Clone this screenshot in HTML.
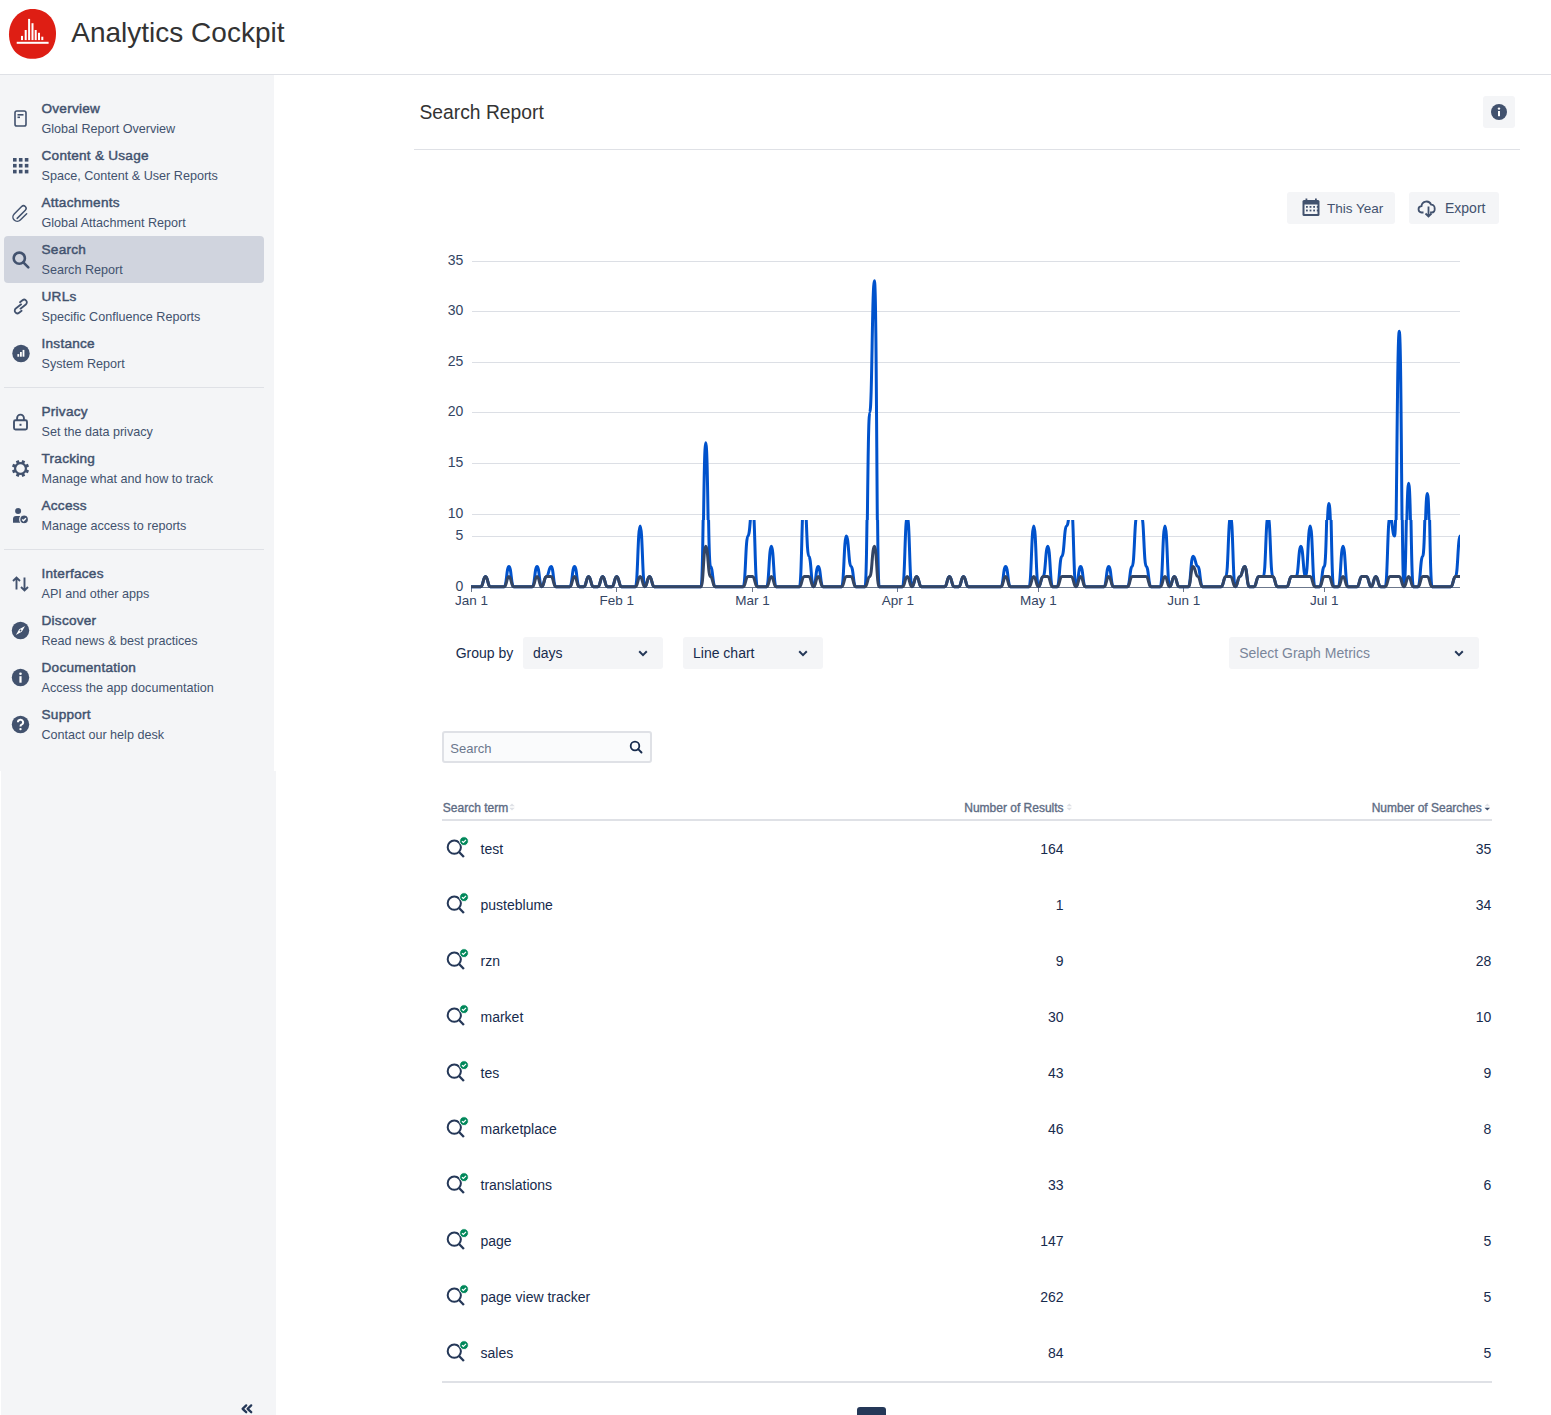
<!DOCTYPE html>
<html><head><meta charset="utf-8"><title>Analytics Cockpit</title>
<style>
html,body{margin:0;padding:0;background:#fff;width:1551px;height:1415px;overflow:hidden;position:relative;font-family:"Liberation Sans", sans-serif;}
.t{position:absolute;white-space:nowrap;line-height:1;font-family:"Liberation Sans", sans-serif;}
svg{position:absolute;left:0;top:0;overflow:visible}
</style></head><body>
<div style="position:absolute;left:0px;top:74px;width:1551px;height:1px;background:#dfe1e6;border-radius:0px;"></div>
<svg width="80" height="74" viewBox="0 0 80 74">
<path d="M32.5 8.9 C46 8.9 56 18.5 56 33.5 C56 48 47.5 58.8 32.8 58.8 C18 58.8 9 48.5 9 34.2 C9 19.5 19.5 8.9 32.5 8.9 Z" fill="#de1e14"/>
<g fill="#fff">
<rect x="16.7" y="41.8" width="31.9" height="2"/>
<rect x="21" y="35.9" width="2" height="4.2"/>
<rect x="24.7" y="30" width="2" height="10.1"/>
<rect x="28.1" y="18.9" width="2" height="21.2"/>
<rect x="31.5" y="23.2" width="2" height="16.9"/>
<rect x="34.7" y="30" width="2" height="10.1"/>
<rect x="38" y="32.8" width="2" height="7.3"/>
<rect x="41.3" y="36.7" width="2" height="3.4"/>
</g></svg>
<div class="t" style="left:71.30px;top:19.10px;font-size:28px;color:#333333;font-weight:400;">Analytics Cockpit</div>
<div style="position:absolute;left:0px;top:75px;width:274px;height:696px;background:#f4f5f7;border-radius:0px;"></div>
<div style="position:absolute;left:1px;top:771px;width:275px;height:644px;background:#f4f5f7;border-radius:0px;"></div>
<div style="position:absolute;left:4px;top:236px;width:260px;height:47px;background:#d0d4de;border-radius:4px;"></div>
<div style="position:absolute;left:4px;top:387px;width:260px;height:1px;background:#dfe1e6;border-radius:0px;"></div>
<div style="position:absolute;left:4px;top:549px;width:260px;height:1px;background:#dfe1e6;border-radius:0px;"></div>
<div class="t" style="left:41.50px;top:102.49px;font-size:13.6px;color:#42526e;font-weight:400;-webkit-text-stroke:0.45px #42526e;letter-spacing:0.25px;">Overview</div>
<div class="t" style="left:41.50px;top:123.03px;font-size:12.6px;color:#42526e;font-weight:400;">Global Report Overview</div>
<svg><rect x="15.0" y="111.0" width="11" height="15" rx="1.8" fill="none" stroke="#42526e" stroke-width="1.6"/><rect x="17.5" y="114.0" width="6" height="1.6" fill="#42526e"/><rect x="17.5" y="116.5" width="2.5" height="1.6" fill="#42526e"/></svg><div class="t" style="left:41.50px;top:149.49px;font-size:13.6px;color:#42526e;font-weight:400;-webkit-text-stroke:0.45px #42526e;letter-spacing:0.25px;">Content &amp; Usage</div>
<div class="t" style="left:41.50px;top:170.03px;font-size:12.6px;color:#42526e;font-weight:400;">Space, Content &amp; User Reports</div>
<svg><rect x="13.0" y="158.0" width="3.6" height="3.6" fill="#42526e"/><rect x="13.0" y="163.9" width="3.6" height="3.6" fill="#42526e"/><rect x="13.0" y="169.8" width="3.6" height="3.6" fill="#42526e"/><rect x="18.9" y="158.0" width="3.6" height="3.6" fill="#42526e"/><rect x="18.9" y="163.9" width="3.6" height="3.6" fill="#42526e"/><rect x="18.9" y="169.8" width="3.6" height="3.6" fill="#42526e"/><rect x="24.8" y="158.0" width="3.6" height="3.6" fill="#42526e"/><rect x="24.8" y="163.9" width="3.6" height="3.6" fill="#42526e"/><rect x="24.8" y="169.8" width="3.6" height="3.6" fill="#42526e"/></svg><div class="t" style="left:41.50px;top:196.49px;font-size:13.6px;color:#42526e;font-weight:400;-webkit-text-stroke:0.45px #42526e;letter-spacing:0.25px;">Attachments</div>
<div class="t" style="left:41.50px;top:217.03px;font-size:12.6px;color:#42526e;font-weight:400;">Global Attachment Report</div>
<svg><g transform="translate(20.5,212.5) rotate(-45)"><path d="M-6.5 1.8 L5 1.8 A2.6 2.6 0 0 0 5 -3.4 L-5.5 -3.4 A4.3 4.3 0 0 0 -5.5 5.2 L3.5 5.2" fill="none" stroke="#42526e" stroke-width="1.5" stroke-linecap="round"/></g></svg><div class="t" style="left:41.50px;top:243.49px;font-size:13.6px;color:#42526e;font-weight:400;-webkit-text-stroke:0.45px #42526e;letter-spacing:0.25px;">Search</div>
<div class="t" style="left:41.50px;top:264.03px;font-size:12.6px;color:#42526e;font-weight:400;">Search Report</div>
<svg><circle cx="19.3" cy="258.2" r="5.6" fill="none" stroke="#42526e" stroke-width="2.6"/><line x1="23.3" y1="262.3" x2="28.3" y2="267.3" stroke="#42526e" stroke-width="2.6" stroke-linecap="round"/></svg><div class="t" style="left:41.50px;top:290.49px;font-size:13.6px;color:#42526e;font-weight:400;-webkit-text-stroke:0.45px #42526e;letter-spacing:0.25px;">URLs</div>
<div class="t" style="left:41.50px;top:311.03px;font-size:12.6px;color:#42526e;font-weight:400;">Specific Confluence Reports</div>
<svg><g transform="translate(20.8,306.5) rotate(-38)" fill="none" stroke="#42526e" stroke-width="1.8" stroke-linecap="round"><path d="M1.6 -1.5 H-5.2 A2.7 2.7 0 0 0 -5.2 3.9 H-2"/><path d="M-1.6 1.5 H5.2 A2.7 2.7 0 0 0 5.2 -3.9 H2"/></g></svg><div class="t" style="left:41.50px;top:337.49px;font-size:13.6px;color:#42526e;font-weight:400;-webkit-text-stroke:0.45px #42526e;letter-spacing:0.25px;">Instance</div>
<div class="t" style="left:41.50px;top:358.03px;font-size:12.6px;color:#42526e;font-weight:400;">System Report</div>
<svg><circle cx="21.0" cy="353.5" r="8.7" fill="#42526e"/><rect x="17.4" y="354.1" width="1.8" height="2.6" fill="#fff"/><rect x="20.0" y="352.0" width="1.8" height="4.7" fill="#fff"/><rect x="22.6" y="349.9" width="1.8" height="6.8" fill="#fff"/></svg><div class="t" style="left:41.50px;top:405.49px;font-size:13.6px;color:#42526e;font-weight:400;-webkit-text-stroke:0.45px #42526e;letter-spacing:0.25px;">Privacy</div>
<div class="t" style="left:41.50px;top:426.03px;font-size:12.6px;color:#42526e;font-weight:400;">Set the data privacy</div>
<svg><path d="M17.1 420.5 v-2.5 a3.4 3.4 0 0 1 6.8 0 v2.5" fill="none" stroke="#42526e" stroke-width="1.9"/><rect x="14.0" y="420.3" width="13" height="9.2" rx="1.5" fill="none" stroke="#42526e" stroke-width="1.9"/><rect x="19.5" y="423.8" width="2" height="2" fill="#42526e"/></svg><div class="t" style="left:41.50px;top:452.49px;font-size:13.6px;color:#42526e;font-weight:400;-webkit-text-stroke:0.45px #42526e;letter-spacing:0.25px;">Tracking</div>
<div class="t" style="left:41.50px;top:473.03px;font-size:12.6px;color:#42526e;font-weight:400;">Manage what and how to track</div>
<svg><rect x="19.0" y="459.9" width="3" height="3.4" transform="rotate(22.5 20.5 468.5)" fill="#42526e"/><rect x="19.0" y="459.9" width="3" height="3.4" transform="rotate(67.5 20.5 468.5)" fill="#42526e"/><rect x="19.0" y="459.9" width="3" height="3.4" transform="rotate(112.5 20.5 468.5)" fill="#42526e"/><rect x="19.0" y="459.9" width="3" height="3.4" transform="rotate(157.5 20.5 468.5)" fill="#42526e"/><rect x="19.0" y="459.9" width="3" height="3.4" transform="rotate(202.5 20.5 468.5)" fill="#42526e"/><rect x="19.0" y="459.9" width="3" height="3.4" transform="rotate(247.5 20.5 468.5)" fill="#42526e"/><rect x="19.0" y="459.9" width="3" height="3.4" transform="rotate(292.5 20.5 468.5)" fill="#42526e"/><rect x="19.0" y="459.9" width="3" height="3.4" transform="rotate(337.5 20.5 468.5)" fill="#42526e"/><circle cx="20.5" cy="468.5" r="5.4" fill="none" stroke="#42526e" stroke-width="2.2"/></svg><div class="t" style="left:41.50px;top:499.49px;font-size:13.6px;color:#42526e;font-weight:400;-webkit-text-stroke:0.45px #42526e;letter-spacing:0.25px;">Access</div>
<div class="t" style="left:41.50px;top:520.03px;font-size:12.6px;color:#42526e;font-weight:400;">Manage access to reports</div>
<svg><circle cx="18.1" cy="510.9" r="3" fill="#42526e"/><path d="M13.0 522.7 v-3.6 a3 3 0 0 1 3 -3 h4.2 v6.6 z" fill="#42526e"/><circle cx="24.1" cy="519.4" r="4.4" fill="#42526e" stroke="#f4f5f7" stroke-width="1.2"/><path d="M22.2 519.5 l1.3 1.3 l2.4 -2.5" fill="none" stroke="#fff" stroke-width="1.3"/></svg><div class="t" style="left:41.50px;top:567.49px;font-size:13.6px;color:#42526e;font-weight:400;-webkit-text-stroke:0.45px #42526e;letter-spacing:0.25px;">Interfaces</div>
<div class="t" style="left:41.50px;top:588.03px;font-size:12.6px;color:#42526e;font-weight:400;">API and other apps</div>
<svg fill="none" stroke="#42526e" stroke-width="1.9"><path d="M16.5 589.5 V577.5 M13.0 581.0 L16.5 577.5 L20.0 581.0"/><path d="M24.5 577.5 V590.5 M21.0 587.0 L24.5 590.5 L28.0 587.0"/></svg><div class="t" style="left:41.50px;top:614.49px;font-size:13.6px;color:#42526e;font-weight:400;-webkit-text-stroke:0.45px #42526e;letter-spacing:0.25px;">Discover</div>
<div class="t" style="left:41.50px;top:635.03px;font-size:12.6px;color:#42526e;font-weight:400;">Read news &amp; best practices</div>
<svg><circle cx="20.5" cy="630.5" r="8.7" fill="#42526e"/><path d="M25.1 625.9 L21.8 631.8 L15.9 635.1 L19.2 629.2 z" fill="#fff"/><circle cx="20.5" cy="630.5" r="0.9" fill="#42526e"/></svg><div class="t" style="left:41.50px;top:661.49px;font-size:13.6px;color:#42526e;font-weight:400;-webkit-text-stroke:0.45px #42526e;letter-spacing:0.25px;">Documentation</div>
<div class="t" style="left:41.50px;top:682.03px;font-size:12.6px;color:#42526e;font-weight:400;">Access the app documentation</div>
<svg><circle cx="20.5" cy="677.5" r="8.7" fill="#42526e"/><circle cx="20.5" cy="673.7" r="1.3" fill="#fff"/><rect x="19.4" y="676.2" width="2.2" height="6.5" fill="#fff"/></svg><div class="t" style="left:41.50px;top:708.49px;font-size:13.6px;color:#42526e;font-weight:400;-webkit-text-stroke:0.45px #42526e;letter-spacing:0.25px;">Support</div>
<div class="t" style="left:41.50px;top:729.03px;font-size:12.6px;color:#42526e;font-weight:400;">Contact our help desk</div>
<svg><circle cx="20.5" cy="724.5" r="8.7" fill="#42526e"/><path d="M17.9 722.3 a2.6 2.6 0 1 1 3.6 2.4 c-0.8 0.4 -1 0.9 -1 1.9" fill="none" stroke="#fff" stroke-width="2"/><circle cx="20.5" cy="729.1" r="1.2" fill="#fff"/></svg><svg fill="none" stroke="#253858" stroke-width="2.3" stroke-linecap="round" stroke-linejoin="round"><path d="M246.2 1405.4 L242.6 1408.8 L246.2 1412.2 M251.2 1405.4 L247.6 1408.8 L251.2 1412.2"/></svg><div class="t" style="left:419.50px;top:103.26px;font-size:19.3px;color:#333333;font-weight:400;">Search Report</div>
<div style="position:absolute;left:414px;top:149px;width:1106px;height:1px;background:#dfe1e6;border-radius:0px;"></div>
<div style="position:absolute;left:1483px;top:96px;width:32px;height:32px;background:#f4f5f7;border-radius:3px;"></div>
<svg><circle cx="1499" cy="112" r="8" fill="#42526e"/><circle cx="1499" cy="108.6" r="1.2" fill="#fff"/><rect x="1498" y="111" width="2" height="5.2" fill="#fff"/></svg><div style="position:absolute;left:1287px;top:192px;width:108px;height:32px;background:#f4f5f7;border-radius:3px;"></div>
<div style="position:absolute;left:1409px;top:192px;width:90px;height:32px;background:#f4f5f7;border-radius:3px;"></div>
<svg><rect x="1302.5" y="200" width="17" height="16" rx="1.5" fill="#42526e"/><rect x="1304.5" y="204.5" width="13" height="9.5" fill="#f4f5f7"/><rect x="1305.5" y="198.5" width="1.8" height="3" fill="#42526e"/><rect x="1315" y="198.5" width="1.8" height="3" fill="#42526e"/><rect x="1306.0" y="206.0" width="1.8" height="1.8" fill="#42526e"/><rect x="1306.0" y="209.6" width="1.8" height="1.8" fill="#42526e"/><rect x="1309.6" y="206.0" width="1.8" height="1.8" fill="#42526e"/><rect x="1309.6" y="209.6" width="1.8" height="1.8" fill="#42526e"/><rect x="1313.2" y="206.0" width="1.8" height="1.8" fill="#42526e"/><rect x="1313.2" y="209.6" width="1.8" height="1.8" fill="#42526e"/><rect x="1316.8" y="206.0" width="1.8" height="1.8" fill="#42526e"/><rect x="1316.8" y="209.6" width="1.8" height="1.8" fill="#42526e"/></svg><div class="t" style="left:1327.00px;top:201.57px;font-size:13.5px;color:#42526e;font-weight:400;">This Year</div>
<svg fill="none" stroke="#42526e" stroke-width="1.8"><path d="M1423.5 212.5 h-1.5 a3.2 3.2 0 0 1 -0.5 -6.4 a5 5 0 0 1 9.6 -1.5 a3.4 3.4 0 0 1 3.5 4 a3 3 0 0 1 -3 3.9 h-1.5"/><path d="M1428.5 206.5 v9.5 M1425.5 213.5 l3 3 l3 -3"/></svg><div class="t" style="left:1445.00px;top:201.15px;font-size:14px;color:#42526e;font-weight:400;">Export</div>
<svg width="1551" height="1415"><rect x="472" y="261" width="988" height="1" fill="#dcdfe5"/><rect x="472" y="311" width="988" height="1" fill="#dcdfe5"/><rect x="472" y="362" width="988" height="1" fill="#dcdfe5"/><rect x="472" y="412" width="988" height="1" fill="#dcdfe5"/><rect x="472" y="463" width="988" height="1" fill="#dcdfe5"/><rect x="472" y="514" width="988" height="1" fill="#dcdfe5"/><rect x="472" y="536" width="988" height="1" fill="#dcdfe5"/><rect x="471" y="587" width="989" height="1" fill="#6b778c"/><rect x="471" y="587" width="1" height="5" fill="#6b778c"/><rect x="616" y="587" width="1" height="5" fill="#6b778c"/><rect x="752" y="587" width="1" height="5" fill="#6b778c"/><rect x="897" y="587" width="1" height="5" fill="#6b778c"/><rect x="1038" y="587" width="1" height="5" fill="#6b778c"/><rect x="1183" y="587" width="1" height="5" fill="#6b778c"/><rect x="1324" y="587" width="1" height="5" fill="#6b778c"/><defs><clipPath id="lo"><rect x="471" y="520" width="989" height="80"/></clipPath><clipPath id="all"><rect x="471" y="240" width="989" height="360"/></clipPath>
<clipPath id="hi"><rect x="471" y="240" width="989" height="280"/></clipPath></defs>
<g fill="none" stroke-width="3" stroke-linejoin="round" stroke-linecap="round">
<path clip-path="url(#lo)" stroke="#0052cc" d="M471.45 586.70 L476.14 586.70 L480.82 586.70 C483.16 586.70 483.16 576.57 485.51 576.57 C487.85 576.57 487.85 586.70 490.19 586.70 L494.88 586.70 L499.57 586.70 L504.25 586.70 C506.60 586.70 506.60 566.44 508.94 566.44 C511.28 566.44 511.28 586.70 513.62 586.70 L518.31 586.70 L523.00 586.70 L527.68 586.70 L532.37 586.70 C534.71 586.70 534.71 566.44 537.05 566.44 C539.40 566.44 539.40 586.70 541.74 586.70 C544.08 586.70 544.08 576.57 546.43 576.57 C548.77 576.57 548.77 566.44 551.11 566.44 C553.45 566.44 553.45 586.70 555.80 586.70 L560.48 586.70 L565.17 586.70 L569.86 586.70 C572.20 586.70 572.20 566.44 574.54 566.44 C576.88 566.44 576.88 586.70 579.23 586.70 L583.91 586.70 C586.26 586.70 586.26 576.57 588.60 576.57 C590.94 576.57 590.94 586.70 593.29 586.70 L597.97 586.70 C600.32 586.70 600.32 576.57 602.66 576.57 C605.00 576.57 605.00 586.70 607.34 586.70 L612.03 586.70 C614.37 586.70 614.37 576.57 616.72 576.57 C619.06 576.57 619.06 586.70 621.40 586.70 L626.09 586.70 L630.77 586.70 L635.46 586.70 C637.80 586.70 637.80 525.92 640.15 525.92 C642.49 525.92 642.49 586.70 644.83 586.70 C647.17 586.70 647.17 576.57 649.52 576.57 C651.86 576.57 651.86 586.70 654.20 586.70 L658.89 586.70 L663.58 586.70 L668.26 586.70 L672.95 586.70 L677.63 586.70 L682.32 586.70 L687.01 586.70 L691.69 586.70 L696.38 586.70 L701.06 586.70 C703.41 586.70 703.41 414.49 705.75 414.49 C708.09 414.49 708.09 566.44 710.44 566.44 C712.78 566.44 712.78 586.70 715.12 586.70 L719.81 586.70 L724.49 586.70 L729.18 586.70 L733.87 586.70 L738.55 586.70 L743.24 586.70 C745.58 586.70 745.58 536.05 747.92 536.05 C750.27 536.05 750.27 505.66 752.61 505.66 C754.95 505.66 754.95 586.70 757.30 586.70 L761.98 586.70 L766.67 586.70 C769.01 586.70 769.01 546.18 771.35 546.18 C773.70 546.18 773.70 586.70 776.04 586.70 L780.73 586.70 L785.41 586.70 L790.10 586.70 L794.78 586.70 L799.47 586.70 C801.81 586.70 801.81 495.53 804.16 495.53 C806.50 495.53 806.50 556.31 808.84 556.31 C811.18 556.31 811.18 586.70 813.53 586.70 C815.87 586.70 815.87 566.44 818.21 566.44 C820.56 566.44 820.56 586.70 822.90 586.70 L827.59 586.70 L832.27 586.70 L836.96 586.70 L841.64 586.70 C843.99 586.70 843.99 536.05 846.33 536.05 C848.67 536.05 848.67 566.44 851.02 566.44 C853.36 566.44 853.36 586.70 855.70 586.70 L860.39 586.70 L865.07 586.70 C867.42 586.70 867.42 384.10 869.76 384.10 C872.10 384.10 872.10 252.41 874.45 252.41 C876.79 252.41 876.79 586.70 879.13 586.70 L883.82 586.70 L888.50 586.70 L893.19 586.70 L897.88 586.70 L902.56 586.70 C904.90 586.70 904.90 515.79 907.25 515.79 C909.59 515.79 909.59 586.70 911.93 586.70 C914.28 586.70 914.28 576.57 916.62 576.57 C918.96 576.57 918.96 586.70 921.31 586.70 L925.99 586.70 L930.68 586.70 L935.36 586.70 L940.05 586.70 L944.74 586.70 C947.08 586.70 947.08 576.57 949.42 576.57 C951.76 576.57 951.76 586.70 954.11 586.70 L958.79 586.70 C961.14 586.70 961.14 576.57 963.48 576.57 C965.82 576.57 965.82 586.70 968.17 586.70 L972.85 586.70 L977.54 586.70 L982.22 586.70 L986.91 586.70 L991.60 586.70 L996.28 586.70 L1000.97 586.70 C1003.31 586.70 1003.31 566.44 1005.65 566.44 C1008.00 566.44 1008.00 586.70 1010.34 586.70 L1015.03 586.70 L1019.71 586.70 L1024.40 586.70 L1029.08 586.70 C1031.43 586.70 1031.43 525.92 1033.77 525.92 C1036.11 525.92 1036.11 586.70 1038.46 586.70 C1040.80 586.70 1040.80 576.57 1043.14 576.57 C1045.49 576.57 1045.49 546.18 1047.83 546.18 C1050.17 546.18 1050.17 586.70 1052.51 586.70 L1057.20 586.70 C1059.54 586.70 1059.54 556.31 1061.89 556.31 C1064.23 556.31 1064.23 525.92 1066.57 525.92 C1068.91 525.92 1068.91 505.66 1071.26 505.66 C1073.60 505.66 1073.60 586.70 1075.94 586.70 C1078.29 586.70 1078.29 566.44 1080.63 566.44 C1082.97 566.44 1082.97 586.70 1085.32 586.70 L1090.00 586.70 L1094.69 586.70 L1099.37 586.70 L1104.06 586.70 C1106.40 586.70 1106.40 566.44 1108.75 566.44 C1111.09 566.44 1111.09 586.70 1113.43 586.70 L1118.12 586.70 L1122.80 586.70 L1127.49 586.70 C1129.83 586.70 1129.83 566.44 1132.18 566.44 C1134.52 566.44 1134.52 515.79 1136.86 515.79 L1141.55 515.79 C1143.89 515.79 1143.89 566.44 1146.23 566.44 C1148.58 566.44 1148.58 586.70 1150.92 586.70 L1155.61 586.70 L1160.29 586.70 C1162.63 586.70 1162.63 525.92 1164.98 525.92 C1167.32 525.92 1167.32 586.70 1169.66 586.70 C1172.01 586.70 1172.01 576.57 1174.35 576.57 C1176.69 576.57 1176.69 586.70 1179.04 586.70 L1183.72 586.70 L1188.41 586.70 C1190.75 586.70 1190.75 556.31 1193.09 556.31 C1195.44 556.31 1195.44 566.44 1197.78 566.44 C1200.12 566.44 1200.12 586.70 1202.47 586.70 L1207.15 586.70 L1211.84 586.70 L1216.52 586.70 L1221.21 586.70 C1223.55 586.70 1223.55 576.57 1225.90 576.57 C1228.24 576.57 1228.24 515.79 1230.58 515.79 C1232.92 515.79 1232.92 586.70 1235.27 586.70 C1237.61 586.70 1237.61 576.57 1239.95 576.57 C1242.30 576.57 1242.30 566.44 1244.64 566.44 C1246.98 566.44 1246.98 586.70 1249.33 586.70 L1254.01 586.70 C1256.36 586.70 1256.36 576.57 1258.70 576.57 L1263.38 576.57 C1265.73 576.57 1265.73 515.79 1268.07 515.79 C1270.41 515.79 1270.41 576.57 1272.76 576.57 C1275.10 576.57 1275.10 586.70 1277.44 586.70 L1282.13 586.70 L1286.81 586.70 C1289.16 586.70 1289.16 576.57 1291.50 576.57 L1296.19 576.57 C1298.53 576.57 1298.53 546.18 1300.87 546.18 C1303.22 546.18 1303.22 576.57 1305.56 576.57 C1307.90 576.57 1307.90 525.92 1310.24 525.92 C1312.59 525.92 1312.59 586.70 1314.93 586.70 L1319.62 586.70 C1321.96 586.70 1321.96 566.44 1324.30 566.44 C1326.64 566.44 1326.64 475.27 1328.99 475.27 C1331.33 475.27 1331.33 586.70 1333.67 586.70 L1338.36 586.70 C1340.70 586.70 1340.70 546.18 1343.05 546.18 C1345.39 546.18 1345.39 586.70 1347.73 586.70 L1352.42 586.70 L1357.10 586.70 C1359.45 586.70 1359.45 576.57 1361.79 576.57 L1366.48 576.57 C1368.82 576.57 1368.82 586.70 1371.16 586.70 C1373.51 586.70 1373.51 576.57 1375.85 576.57 C1378.19 576.57 1378.19 586.70 1380.53 586.70 L1385.22 586.70 C1387.56 586.70 1387.56 515.79 1389.91 515.79 C1392.25 515.79 1392.25 536.05 1394.59 536.05 C1396.93 536.05 1396.93 303.06 1399.28 303.06 C1401.62 303.06 1401.62 586.70 1403.96 586.70 C1406.31 586.70 1406.31 455.01 1408.65 455.01 C1410.99 455.01 1410.99 586.70 1413.34 586.70 L1418.02 586.70 C1420.37 586.70 1420.37 556.31 1422.71 556.31 C1425.05 556.31 1425.05 465.14 1427.39 465.14 C1429.74 465.14 1429.74 586.70 1432.08 586.70 L1436.77 586.70 L1441.45 586.70 L1446.14 586.70 L1450.82 586.70 C1453.17 586.70 1453.17 576.57 1455.51 576.57 C1457.85 576.57 1457.85 536.05 1460.20 536.05"/>
<g clip-path="url(#hi)"><path transform="translate(0,28.3)" stroke="#0052cc" d="M471.45 586.70 L476.14 586.70 L480.82 586.70 C483.16 586.70 483.16 576.57 485.51 576.57 C487.85 576.57 487.85 586.70 490.19 586.70 L494.88 586.70 L499.57 586.70 L504.25 586.70 C506.60 586.70 506.60 566.44 508.94 566.44 C511.28 566.44 511.28 586.70 513.62 586.70 L518.31 586.70 L523.00 586.70 L527.68 586.70 L532.37 586.70 C534.71 586.70 534.71 566.44 537.05 566.44 C539.40 566.44 539.40 586.70 541.74 586.70 C544.08 586.70 544.08 576.57 546.43 576.57 C548.77 576.57 548.77 566.44 551.11 566.44 C553.45 566.44 553.45 586.70 555.80 586.70 L560.48 586.70 L565.17 586.70 L569.86 586.70 C572.20 586.70 572.20 566.44 574.54 566.44 C576.88 566.44 576.88 586.70 579.23 586.70 L583.91 586.70 C586.26 586.70 586.26 576.57 588.60 576.57 C590.94 576.57 590.94 586.70 593.29 586.70 L597.97 586.70 C600.32 586.70 600.32 576.57 602.66 576.57 C605.00 576.57 605.00 586.70 607.34 586.70 L612.03 586.70 C614.37 586.70 614.37 576.57 616.72 576.57 C619.06 576.57 619.06 586.70 621.40 586.70 L626.09 586.70 L630.77 586.70 L635.46 586.70 C637.80 586.70 637.80 525.92 640.15 525.92 C642.49 525.92 642.49 586.70 644.83 586.70 C647.17 586.70 647.17 576.57 649.52 576.57 C651.86 576.57 651.86 586.70 654.20 586.70 L658.89 586.70 L663.58 586.70 L668.26 586.70 L672.95 586.70 L677.63 586.70 L682.32 586.70 L687.01 586.70 L691.69 586.70 L696.38 586.70 L701.06 586.70 C703.41 586.70 703.41 414.49 705.75 414.49 C708.09 414.49 708.09 566.44 710.44 566.44 C712.78 566.44 712.78 586.70 715.12 586.70 L719.81 586.70 L724.49 586.70 L729.18 586.70 L733.87 586.70 L738.55 586.70 L743.24 586.70 C745.58 586.70 745.58 536.05 747.92 536.05 C750.27 536.05 750.27 505.66 752.61 505.66 C754.95 505.66 754.95 586.70 757.30 586.70 L761.98 586.70 L766.67 586.70 C769.01 586.70 769.01 546.18 771.35 546.18 C773.70 546.18 773.70 586.70 776.04 586.70 L780.73 586.70 L785.41 586.70 L790.10 586.70 L794.78 586.70 L799.47 586.70 C801.81 586.70 801.81 495.53 804.16 495.53 C806.50 495.53 806.50 556.31 808.84 556.31 C811.18 556.31 811.18 586.70 813.53 586.70 C815.87 586.70 815.87 566.44 818.21 566.44 C820.56 566.44 820.56 586.70 822.90 586.70 L827.59 586.70 L832.27 586.70 L836.96 586.70 L841.64 586.70 C843.99 586.70 843.99 536.05 846.33 536.05 C848.67 536.05 848.67 566.44 851.02 566.44 C853.36 566.44 853.36 586.70 855.70 586.70 L860.39 586.70 L865.07 586.70 C867.42 586.70 867.42 384.10 869.76 384.10 C872.10 384.10 872.10 252.41 874.45 252.41 C876.79 252.41 876.79 586.70 879.13 586.70 L883.82 586.70 L888.50 586.70 L893.19 586.70 L897.88 586.70 L902.56 586.70 C904.90 586.70 904.90 515.79 907.25 515.79 C909.59 515.79 909.59 586.70 911.93 586.70 C914.28 586.70 914.28 576.57 916.62 576.57 C918.96 576.57 918.96 586.70 921.31 586.70 L925.99 586.70 L930.68 586.70 L935.36 586.70 L940.05 586.70 L944.74 586.70 C947.08 586.70 947.08 576.57 949.42 576.57 C951.76 576.57 951.76 586.70 954.11 586.70 L958.79 586.70 C961.14 586.70 961.14 576.57 963.48 576.57 C965.82 576.57 965.82 586.70 968.17 586.70 L972.85 586.70 L977.54 586.70 L982.22 586.70 L986.91 586.70 L991.60 586.70 L996.28 586.70 L1000.97 586.70 C1003.31 586.70 1003.31 566.44 1005.65 566.44 C1008.00 566.44 1008.00 586.70 1010.34 586.70 L1015.03 586.70 L1019.71 586.70 L1024.40 586.70 L1029.08 586.70 C1031.43 586.70 1031.43 525.92 1033.77 525.92 C1036.11 525.92 1036.11 586.70 1038.46 586.70 C1040.80 586.70 1040.80 576.57 1043.14 576.57 C1045.49 576.57 1045.49 546.18 1047.83 546.18 C1050.17 546.18 1050.17 586.70 1052.51 586.70 L1057.20 586.70 C1059.54 586.70 1059.54 556.31 1061.89 556.31 C1064.23 556.31 1064.23 525.92 1066.57 525.92 C1068.91 525.92 1068.91 505.66 1071.26 505.66 C1073.60 505.66 1073.60 586.70 1075.94 586.70 C1078.29 586.70 1078.29 566.44 1080.63 566.44 C1082.97 566.44 1082.97 586.70 1085.32 586.70 L1090.00 586.70 L1094.69 586.70 L1099.37 586.70 L1104.06 586.70 C1106.40 586.70 1106.40 566.44 1108.75 566.44 C1111.09 566.44 1111.09 586.70 1113.43 586.70 L1118.12 586.70 L1122.80 586.70 L1127.49 586.70 C1129.83 586.70 1129.83 566.44 1132.18 566.44 C1134.52 566.44 1134.52 515.79 1136.86 515.79 L1141.55 515.79 C1143.89 515.79 1143.89 566.44 1146.23 566.44 C1148.58 566.44 1148.58 586.70 1150.92 586.70 L1155.61 586.70 L1160.29 586.70 C1162.63 586.70 1162.63 525.92 1164.98 525.92 C1167.32 525.92 1167.32 586.70 1169.66 586.70 C1172.01 586.70 1172.01 576.57 1174.35 576.57 C1176.69 576.57 1176.69 586.70 1179.04 586.70 L1183.72 586.70 L1188.41 586.70 C1190.75 586.70 1190.75 556.31 1193.09 556.31 C1195.44 556.31 1195.44 566.44 1197.78 566.44 C1200.12 566.44 1200.12 586.70 1202.47 586.70 L1207.15 586.70 L1211.84 586.70 L1216.52 586.70 L1221.21 586.70 C1223.55 586.70 1223.55 576.57 1225.90 576.57 C1228.24 576.57 1228.24 515.79 1230.58 515.79 C1232.92 515.79 1232.92 586.70 1235.27 586.70 C1237.61 586.70 1237.61 576.57 1239.95 576.57 C1242.30 576.57 1242.30 566.44 1244.64 566.44 C1246.98 566.44 1246.98 586.70 1249.33 586.70 L1254.01 586.70 C1256.36 586.70 1256.36 576.57 1258.70 576.57 L1263.38 576.57 C1265.73 576.57 1265.73 515.79 1268.07 515.79 C1270.41 515.79 1270.41 576.57 1272.76 576.57 C1275.10 576.57 1275.10 586.70 1277.44 586.70 L1282.13 586.70 L1286.81 586.70 C1289.16 586.70 1289.16 576.57 1291.50 576.57 L1296.19 576.57 C1298.53 576.57 1298.53 546.18 1300.87 546.18 C1303.22 546.18 1303.22 576.57 1305.56 576.57 C1307.90 576.57 1307.90 525.92 1310.24 525.92 C1312.59 525.92 1312.59 586.70 1314.93 586.70 L1319.62 586.70 C1321.96 586.70 1321.96 566.44 1324.30 566.44 C1326.64 566.44 1326.64 475.27 1328.99 475.27 C1331.33 475.27 1331.33 586.70 1333.67 586.70 L1338.36 586.70 C1340.70 586.70 1340.70 546.18 1343.05 546.18 C1345.39 546.18 1345.39 586.70 1347.73 586.70 L1352.42 586.70 L1357.10 586.70 C1359.45 586.70 1359.45 576.57 1361.79 576.57 L1366.48 576.57 C1368.82 576.57 1368.82 586.70 1371.16 586.70 C1373.51 586.70 1373.51 576.57 1375.85 576.57 C1378.19 576.57 1378.19 586.70 1380.53 586.70 L1385.22 586.70 C1387.56 586.70 1387.56 515.79 1389.91 515.79 C1392.25 515.79 1392.25 536.05 1394.59 536.05 C1396.93 536.05 1396.93 303.06 1399.28 303.06 C1401.62 303.06 1401.62 586.70 1403.96 586.70 C1406.31 586.70 1406.31 455.01 1408.65 455.01 C1410.99 455.01 1410.99 586.70 1413.34 586.70 L1418.02 586.70 C1420.37 586.70 1420.37 556.31 1422.71 556.31 C1425.05 556.31 1425.05 465.14 1427.39 465.14 C1429.74 465.14 1429.74 586.70 1432.08 586.70 L1436.77 586.70 L1441.45 586.70 L1446.14 586.70 L1450.82 586.70 C1453.17 586.70 1453.17 576.57 1455.51 576.57 C1457.85 576.57 1457.85 536.05 1460.20 536.05"/></g>
<path clip-path="url(#all)" stroke="#344563" d="M471.45 586.70 L476.14 586.70 L480.82 586.70 C483.16 586.70 483.16 576.57 485.51 576.57 C487.85 576.57 487.85 586.70 490.19 586.70 L494.88 586.70 L499.57 586.70 L504.25 586.70 C506.60 586.70 506.60 576.57 508.94 576.57 C511.28 576.57 511.28 586.70 513.62 586.70 L518.31 586.70 L523.00 586.70 L527.68 586.70 L532.37 586.70 C534.71 586.70 534.71 576.57 537.05 576.57 C539.40 576.57 539.40 586.70 541.74 586.70 C544.08 586.70 544.08 576.57 546.43 576.57 L551.11 576.57 C553.45 576.57 553.45 586.70 555.80 586.70 L560.48 586.70 L565.17 586.70 L569.86 586.70 C572.20 586.70 572.20 576.57 574.54 576.57 C576.88 576.57 576.88 586.70 579.23 586.70 L583.91 586.70 C586.26 586.70 586.26 576.57 588.60 576.57 C590.94 576.57 590.94 586.70 593.29 586.70 L597.97 586.70 C600.32 586.70 600.32 576.57 602.66 576.57 C605.00 576.57 605.00 586.70 607.34 586.70 L612.03 586.70 C614.37 586.70 614.37 576.57 616.72 576.57 C619.06 576.57 619.06 586.70 621.40 586.70 L626.09 586.70 L630.77 586.70 L635.46 586.70 C637.80 586.70 637.80 576.57 640.15 576.57 C642.49 576.57 642.49 586.70 644.83 586.70 C647.17 586.70 647.17 576.57 649.52 576.57 C651.86 576.57 651.86 586.70 654.20 586.70 L658.89 586.70 L663.58 586.70 L668.26 586.70 L672.95 586.70 L677.63 586.70 L682.32 586.70 L687.01 586.70 L691.69 586.70 L696.38 586.70 L701.06 586.70 C703.41 586.70 703.41 546.18 705.75 546.18 C708.09 546.18 708.09 576.57 710.44 576.57 C712.78 576.57 712.78 586.70 715.12 586.70 L719.81 586.70 L724.49 586.70 L729.18 586.70 L733.87 586.70 L738.55 586.70 L743.24 586.70 C745.58 586.70 745.58 576.57 747.92 576.57 L752.61 576.57 C754.95 576.57 754.95 586.70 757.30 586.70 L761.98 586.70 L766.67 586.70 C769.01 586.70 769.01 576.57 771.35 576.57 C773.70 576.57 773.70 586.70 776.04 586.70 L780.73 586.70 L785.41 586.70 L790.10 586.70 L794.78 586.70 L799.47 586.70 C801.81 586.70 801.81 576.57 804.16 576.57 L808.84 576.57 C811.18 576.57 811.18 586.70 813.53 586.70 C815.87 586.70 815.87 576.57 818.21 576.57 C820.56 576.57 820.56 586.70 822.90 586.70 L827.59 586.70 L832.27 586.70 L836.96 586.70 L841.64 586.70 C843.99 586.70 843.99 576.57 846.33 576.57 L851.02 576.57 C853.36 576.57 853.36 586.70 855.70 586.70 L860.39 586.70 L865.07 586.70 C867.42 586.70 867.42 576.57 869.76 576.57 C872.10 576.57 872.10 546.18 874.45 546.18 C876.79 546.18 876.79 586.70 879.13 586.70 L883.82 586.70 L888.50 586.70 L893.19 586.70 L897.88 586.70 L902.56 586.70 C904.90 586.70 904.90 576.57 907.25 576.57 C909.59 576.57 909.59 586.70 911.93 586.70 C914.28 586.70 914.28 576.57 916.62 576.57 C918.96 576.57 918.96 586.70 921.31 586.70 L925.99 586.70 L930.68 586.70 L935.36 586.70 L940.05 586.70 L944.74 586.70 C947.08 586.70 947.08 576.57 949.42 576.57 C951.76 576.57 951.76 586.70 954.11 586.70 L958.79 586.70 C961.14 586.70 961.14 576.57 963.48 576.57 C965.82 576.57 965.82 586.70 968.17 586.70 L972.85 586.70 L977.54 586.70 L982.22 586.70 L986.91 586.70 L991.60 586.70 L996.28 586.70 L1000.97 586.70 C1003.31 586.70 1003.31 576.57 1005.65 576.57 C1008.00 576.57 1008.00 586.70 1010.34 586.70 L1015.03 586.70 L1019.71 586.70 L1024.40 586.70 L1029.08 586.70 C1031.43 586.70 1031.43 576.57 1033.77 576.57 C1036.11 576.57 1036.11 586.70 1038.46 586.70 C1040.80 586.70 1040.80 576.57 1043.14 576.57 L1047.83 576.57 C1050.17 576.57 1050.17 586.70 1052.51 586.70 L1057.20 586.70 C1059.54 586.70 1059.54 576.57 1061.89 576.57 L1066.57 576.57 L1071.26 576.57 C1073.60 576.57 1073.60 586.70 1075.94 586.70 C1078.29 586.70 1078.29 576.57 1080.63 576.57 C1082.97 576.57 1082.97 586.70 1085.32 586.70 L1090.00 586.70 L1094.69 586.70 L1099.37 586.70 L1104.06 586.70 C1106.40 586.70 1106.40 576.57 1108.75 576.57 C1111.09 576.57 1111.09 586.70 1113.43 586.70 L1118.12 586.70 L1122.80 586.70 L1127.49 586.70 C1129.83 586.70 1129.83 576.57 1132.18 576.57 L1136.86 576.57 L1141.55 576.57 L1146.23 576.57 C1148.58 576.57 1148.58 586.70 1150.92 586.70 L1155.61 586.70 L1160.29 586.70 C1162.63 586.70 1162.63 576.57 1164.98 576.57 C1167.32 576.57 1167.32 586.70 1169.66 586.70 C1172.01 586.70 1172.01 576.57 1174.35 576.57 C1176.69 576.57 1176.69 586.70 1179.04 586.70 L1183.72 586.70 L1188.41 586.70 C1190.75 586.70 1190.75 566.44 1193.09 566.44 C1195.44 566.44 1195.44 576.57 1197.78 576.57 C1200.12 576.57 1200.12 586.70 1202.47 586.70 L1207.15 586.70 L1211.84 586.70 L1216.52 586.70 L1221.21 586.70 C1223.55 586.70 1223.55 576.57 1225.90 576.57 L1230.58 576.57 C1232.92 576.57 1232.92 586.70 1235.27 586.70 C1237.61 586.70 1237.61 576.57 1239.95 576.57 C1242.30 576.57 1242.30 566.44 1244.64 566.44 C1246.98 566.44 1246.98 586.70 1249.33 586.70 L1254.01 586.70 C1256.36 586.70 1256.36 576.57 1258.70 576.57 L1263.38 576.57 L1268.07 576.57 L1272.76 576.57 C1275.10 576.57 1275.10 586.70 1277.44 586.70 L1282.13 586.70 L1286.81 586.70 C1289.16 586.70 1289.16 576.57 1291.50 576.57 L1296.19 576.57 L1300.87 576.57 L1305.56 576.57 L1310.24 576.57 C1312.59 576.57 1312.59 586.70 1314.93 586.70 L1319.62 586.70 C1321.96 586.70 1321.96 576.57 1324.30 576.57 L1328.99 576.57 C1331.33 576.57 1331.33 586.70 1333.67 586.70 L1338.36 586.70 C1340.70 586.70 1340.70 576.57 1343.05 576.57 C1345.39 576.57 1345.39 586.70 1347.73 586.70 L1352.42 586.70 L1357.10 586.70 C1359.45 586.70 1359.45 576.57 1361.79 576.57 L1366.48 576.57 C1368.82 576.57 1368.82 586.70 1371.16 586.70 C1373.51 586.70 1373.51 576.57 1375.85 576.57 C1378.19 576.57 1378.19 586.70 1380.53 586.70 L1385.22 586.70 C1387.56 586.70 1387.56 576.57 1389.91 576.57 L1394.59 576.57 L1399.28 576.57 C1401.62 576.57 1401.62 586.70 1403.96 586.70 C1406.31 586.70 1406.31 576.57 1408.65 576.57 C1410.99 576.57 1410.99 586.70 1413.34 586.70 L1418.02 586.70 C1420.37 586.70 1420.37 576.57 1422.71 576.57 L1427.39 576.57 C1429.74 576.57 1429.74 586.70 1432.08 586.70 L1436.77 586.70 L1441.45 586.70 L1446.14 586.70 L1450.82 586.70 C1453.17 586.70 1453.17 576.57 1455.51 576.57 L1460.20 576.57"/>
</g></svg>
<div class="t" style="right:1087.70px;top:253.45px;font-size:14px;color:#344563;font-weight:400;">35</div>
<div class="t" style="right:1087.70px;top:303.45px;font-size:14px;color:#344563;font-weight:400;">30</div>
<div class="t" style="right:1087.70px;top:354.45px;font-size:14px;color:#344563;font-weight:400;">25</div>
<div class="t" style="right:1087.70px;top:404.45px;font-size:14px;color:#344563;font-weight:400;">20</div>
<div class="t" style="right:1087.70px;top:455.45px;font-size:14px;color:#344563;font-weight:400;">15</div>
<div class="t" style="right:1087.70px;top:506.45px;font-size:14px;color:#344563;font-weight:400;">10</div>
<div class="t" style="right:1087.70px;top:528.45px;font-size:14px;color:#344563;font-weight:400;">5</div>
<div class="t" style="right:1087.70px;top:579.45px;font-size:14px;color:#344563;font-weight:400;">0</div>
<div class="t" style="left:271.45px;width:400px;text-align:center;top:594.27px;font-size:13.5px;color:#344563;font-weight:400;">Jan 1</div>
<div class="t" style="left:416.72px;width:400px;text-align:center;top:594.27px;font-size:13.5px;color:#344563;font-weight:400;">Feb 1</div>
<div class="t" style="left:552.61px;width:400px;text-align:center;top:594.27px;font-size:13.5px;color:#344563;font-weight:400;">Mar 1</div>
<div class="t" style="left:697.88px;width:400px;text-align:center;top:594.27px;font-size:13.5px;color:#344563;font-weight:400;">Apr 1</div>
<div class="t" style="left:838.46px;width:400px;text-align:center;top:594.27px;font-size:13.5px;color:#344563;font-weight:400;">May 1</div>
<div class="t" style="left:983.72px;width:400px;text-align:center;top:594.27px;font-size:13.5px;color:#344563;font-weight:400;">Jun 1</div>
<div class="t" style="left:1124.30px;width:400px;text-align:center;top:594.27px;font-size:13.5px;color:#344563;font-weight:400;">Jul 1</div>
<div class="t" style="left:455.70px;top:646.15px;font-size:14px;color:#172b4d;font-weight:400;">Group by</div>
<div style="position:absolute;left:523px;top:637px;width:140px;height:32px;background:#f4f5f7;border-radius:3px;"></div>
<div class="t" style="left:533.00px;top:646.15px;font-size:14px;color:#172b4d;font-weight:400;">days</div>
<svg fill="none" stroke="#253858" stroke-width="2"><path d="M639.2 651.3 L643 655.0999999999999 L646.8 651.3"/></svg><div style="position:absolute;left:683px;top:637px;width:140px;height:32px;background:#f4f5f7;border-radius:3px;"></div>
<div class="t" style="left:693.00px;top:646.15px;font-size:14px;color:#172b4d;font-weight:400;">Line chart</div>
<svg fill="none" stroke="#253858" stroke-width="2"><path d="M799.2 651.3 L803 655.0999999999999 L806.8 651.3"/></svg><div style="position:absolute;left:1229px;top:637px;width:250px;height:32px;background:#f4f5f7;border-radius:3px;"></div>
<div class="t" style="left:1239.20px;top:646.15px;font-size:14px;color:#7a869a;font-weight:400;">Select Graph Metrics</div>
<svg fill="none" stroke="#253858" stroke-width="2"><path d="M1455.2 651.3 L1459 655.0999999999999 L1462.8 651.3"/></svg><div style="position:absolute;left:442px;top:731px;width:206px;height:28px;background:#fafbfc;border-radius:3px;border:2px solid #dfe1e6;"></div>
<div class="t" style="left:450.30px;top:742.20px;font-size:13px;color:#6b778c;font-weight:400;">Search</div>
<svg><circle cx="635" cy="746" r="4.3" fill="none" stroke="#172b4d" stroke-width="1.8"/><line x1="638.2" y1="749.2" x2="641.5" y2="752.5" stroke="#172b4d" stroke-width="1.9" stroke-linecap="round"/></svg><div class="t" style="left:442.80px;top:801.64px;font-size:12px;color:#5e6c84;font-weight:400;-webkit-text-stroke:0.35px #5e6c84;">Search term</div>
<div class="t" style="right:487.40px;top:801.64px;font-size:12px;color:#5e6c84;font-weight:400;-webkit-text-stroke:0.35px #5e6c84;">Number of Results</div>
<div class="t" style="right:69.30px;top:801.64px;font-size:12px;color:#5e6c84;font-weight:400;-webkit-text-stroke:0.35px #5e6c84;">Number of Searches</div>
<svg><path d="M509.2 806.3 L512.0 803.5 L514.8 806.3 z" fill="#dfe1e6"/><path d="M509.2 807.7 L512.0 810.5 L514.8 807.7 z" fill="#dfe1e6"/></svg><svg><path d="M1066.5 806.3 L1069.3 803.5 L1072.1 806.3 z" fill="#dfe1e6"/><path d="M1066.5 807.7 L1069.3 810.5 L1072.1 807.7 z" fill="#dfe1e6"/></svg><svg><path d="M1484.5 806.3 L1487.3 803.5 L1490.1 806.3 z" fill="#dfe1e6"/><path d="M1484.5 807.7 L1487.3 810.5 L1490.1 807.7 z" fill="#42526e"/></svg><div style="position:absolute;left:442px;top:819px;width:1050px;height:2px;background:#dfe1e6;border-radius:0px;"></div>
<svg><circle cx="454.3" cy="847.2" r="6.6" fill="none" stroke="#253858" stroke-width="2.0"/><line x1="458.8" y1="851.7" x2="463.9" y2="857" stroke="#253858" stroke-width="2.3"/><circle cx="464" cy="841.1" r="4.4" fill="#00875a" stroke="#fff" stroke-width="0.9"/><path d="M462 841.2 l1.4 1.3 l2.6 -2.6" fill="none" stroke="#fff" stroke-width="1.2"/></svg><div class="t" style="left:480.50px;top:842.15px;font-size:14px;color:#172b4d;font-weight:400;">test</div>
<div class="t" style="right:487.40px;top:842.15px;font-size:14px;color:#172b4d;font-weight:400;">164</div>
<div class="t" style="right:59.60px;top:842.15px;font-size:14px;color:#172b4d;font-weight:400;">35</div>
<svg><circle cx="454.3" cy="903.2" r="6.6" fill="none" stroke="#253858" stroke-width="2.0"/><line x1="458.8" y1="907.7" x2="463.9" y2="913" stroke="#253858" stroke-width="2.3"/><circle cx="464" cy="897.1" r="4.4" fill="#00875a" stroke="#fff" stroke-width="0.9"/><path d="M462 897.2 l1.4 1.3 l2.6 -2.6" fill="none" stroke="#fff" stroke-width="1.2"/></svg><div class="t" style="left:480.50px;top:898.15px;font-size:14px;color:#172b4d;font-weight:400;">pusteblume</div>
<div class="t" style="right:487.40px;top:898.15px;font-size:14px;color:#172b4d;font-weight:400;">1</div>
<div class="t" style="right:59.60px;top:898.15px;font-size:14px;color:#172b4d;font-weight:400;">34</div>
<svg><circle cx="454.3" cy="959.2" r="6.6" fill="none" stroke="#253858" stroke-width="2.0"/><line x1="458.8" y1="963.7" x2="463.9" y2="969" stroke="#253858" stroke-width="2.3"/><circle cx="464" cy="953.1" r="4.4" fill="#00875a" stroke="#fff" stroke-width="0.9"/><path d="M462 953.2 l1.4 1.3 l2.6 -2.6" fill="none" stroke="#fff" stroke-width="1.2"/></svg><div class="t" style="left:480.50px;top:954.15px;font-size:14px;color:#172b4d;font-weight:400;">rzn</div>
<div class="t" style="right:487.40px;top:954.15px;font-size:14px;color:#172b4d;font-weight:400;">9</div>
<div class="t" style="right:59.60px;top:954.15px;font-size:14px;color:#172b4d;font-weight:400;">28</div>
<svg><circle cx="454.3" cy="1015.2" r="6.6" fill="none" stroke="#253858" stroke-width="2.0"/><line x1="458.8" y1="1019.7" x2="463.9" y2="1025" stroke="#253858" stroke-width="2.3"/><circle cx="464" cy="1009.1" r="4.4" fill="#00875a" stroke="#fff" stroke-width="0.9"/><path d="M462 1009.2 l1.4 1.3 l2.6 -2.6" fill="none" stroke="#fff" stroke-width="1.2"/></svg><div class="t" style="left:480.50px;top:1010.15px;font-size:14px;color:#172b4d;font-weight:400;">market</div>
<div class="t" style="right:487.40px;top:1010.15px;font-size:14px;color:#172b4d;font-weight:400;">30</div>
<div class="t" style="right:59.60px;top:1010.15px;font-size:14px;color:#172b4d;font-weight:400;">10</div>
<svg><circle cx="454.3" cy="1071.2" r="6.6" fill="none" stroke="#253858" stroke-width="2.0"/><line x1="458.8" y1="1075.7" x2="463.9" y2="1081" stroke="#253858" stroke-width="2.3"/><circle cx="464" cy="1065.1" r="4.4" fill="#00875a" stroke="#fff" stroke-width="0.9"/><path d="M462 1065.2 l1.4 1.3 l2.6 -2.6" fill="none" stroke="#fff" stroke-width="1.2"/></svg><div class="t" style="left:480.50px;top:1066.15px;font-size:14px;color:#172b4d;font-weight:400;">tes</div>
<div class="t" style="right:487.40px;top:1066.15px;font-size:14px;color:#172b4d;font-weight:400;">43</div>
<div class="t" style="right:59.60px;top:1066.15px;font-size:14px;color:#172b4d;font-weight:400;">9</div>
<svg><circle cx="454.3" cy="1127.2" r="6.6" fill="none" stroke="#253858" stroke-width="2.0"/><line x1="458.8" y1="1131.7" x2="463.9" y2="1137" stroke="#253858" stroke-width="2.3"/><circle cx="464" cy="1121.1" r="4.4" fill="#00875a" stroke="#fff" stroke-width="0.9"/><path d="M462 1121.2 l1.4 1.3 l2.6 -2.6" fill="none" stroke="#fff" stroke-width="1.2"/></svg><div class="t" style="left:480.50px;top:1122.15px;font-size:14px;color:#172b4d;font-weight:400;">marketplace</div>
<div class="t" style="right:487.40px;top:1122.15px;font-size:14px;color:#172b4d;font-weight:400;">46</div>
<div class="t" style="right:59.60px;top:1122.15px;font-size:14px;color:#172b4d;font-weight:400;">8</div>
<svg><circle cx="454.3" cy="1183.2" r="6.6" fill="none" stroke="#253858" stroke-width="2.0"/><line x1="458.8" y1="1187.7" x2="463.9" y2="1193" stroke="#253858" stroke-width="2.3"/><circle cx="464" cy="1177.1" r="4.4" fill="#00875a" stroke="#fff" stroke-width="0.9"/><path d="M462 1177.2 l1.4 1.3 l2.6 -2.6" fill="none" stroke="#fff" stroke-width="1.2"/></svg><div class="t" style="left:480.50px;top:1178.15px;font-size:14px;color:#172b4d;font-weight:400;">translations</div>
<div class="t" style="right:487.40px;top:1178.15px;font-size:14px;color:#172b4d;font-weight:400;">33</div>
<div class="t" style="right:59.60px;top:1178.15px;font-size:14px;color:#172b4d;font-weight:400;">6</div>
<svg><circle cx="454.3" cy="1239.2" r="6.6" fill="none" stroke="#253858" stroke-width="2.0"/><line x1="458.8" y1="1243.7" x2="463.9" y2="1249" stroke="#253858" stroke-width="2.3"/><circle cx="464" cy="1233.1" r="4.4" fill="#00875a" stroke="#fff" stroke-width="0.9"/><path d="M462 1233.2 l1.4 1.3 l2.6 -2.6" fill="none" stroke="#fff" stroke-width="1.2"/></svg><div class="t" style="left:480.50px;top:1234.15px;font-size:14px;color:#172b4d;font-weight:400;">page</div>
<div class="t" style="right:487.40px;top:1234.15px;font-size:14px;color:#172b4d;font-weight:400;">147</div>
<div class="t" style="right:59.60px;top:1234.15px;font-size:14px;color:#172b4d;font-weight:400;">5</div>
<svg><circle cx="454.3" cy="1295.2" r="6.6" fill="none" stroke="#253858" stroke-width="2.0"/><line x1="458.8" y1="1299.7" x2="463.9" y2="1305" stroke="#253858" stroke-width="2.3"/><circle cx="464" cy="1289.1" r="4.4" fill="#00875a" stroke="#fff" stroke-width="0.9"/><path d="M462 1289.2 l1.4 1.3 l2.6 -2.6" fill="none" stroke="#fff" stroke-width="1.2"/></svg><div class="t" style="left:480.50px;top:1290.15px;font-size:14px;color:#172b4d;font-weight:400;">page view tracker</div>
<div class="t" style="right:487.40px;top:1290.15px;font-size:14px;color:#172b4d;font-weight:400;">262</div>
<div class="t" style="right:59.60px;top:1290.15px;font-size:14px;color:#172b4d;font-weight:400;">5</div>
<svg><circle cx="454.3" cy="1351.2" r="6.6" fill="none" stroke="#253858" stroke-width="2.0"/><line x1="458.8" y1="1355.7" x2="463.9" y2="1361" stroke="#253858" stroke-width="2.3"/><circle cx="464" cy="1345.1" r="4.4" fill="#00875a" stroke="#fff" stroke-width="0.9"/><path d="M462 1345.2 l1.4 1.3 l2.6 -2.6" fill="none" stroke="#fff" stroke-width="1.2"/></svg><div class="t" style="left:480.50px;top:1346.15px;font-size:14px;color:#172b4d;font-weight:400;">sales</div>
<div class="t" style="right:487.40px;top:1346.15px;font-size:14px;color:#172b4d;font-weight:400;">84</div>
<div class="t" style="right:59.60px;top:1346.15px;font-size:14px;color:#172b4d;font-weight:400;">5</div>
<div style="position:absolute;left:442px;top:1381px;width:1050px;height:2px;background:#dfe1e6;border-radius:0px;"></div>
<div style="position:absolute;left:857px;top:1407px;width:29px;height:30px;background:#253858;border-radius:3px;"></div>
</body></html>
